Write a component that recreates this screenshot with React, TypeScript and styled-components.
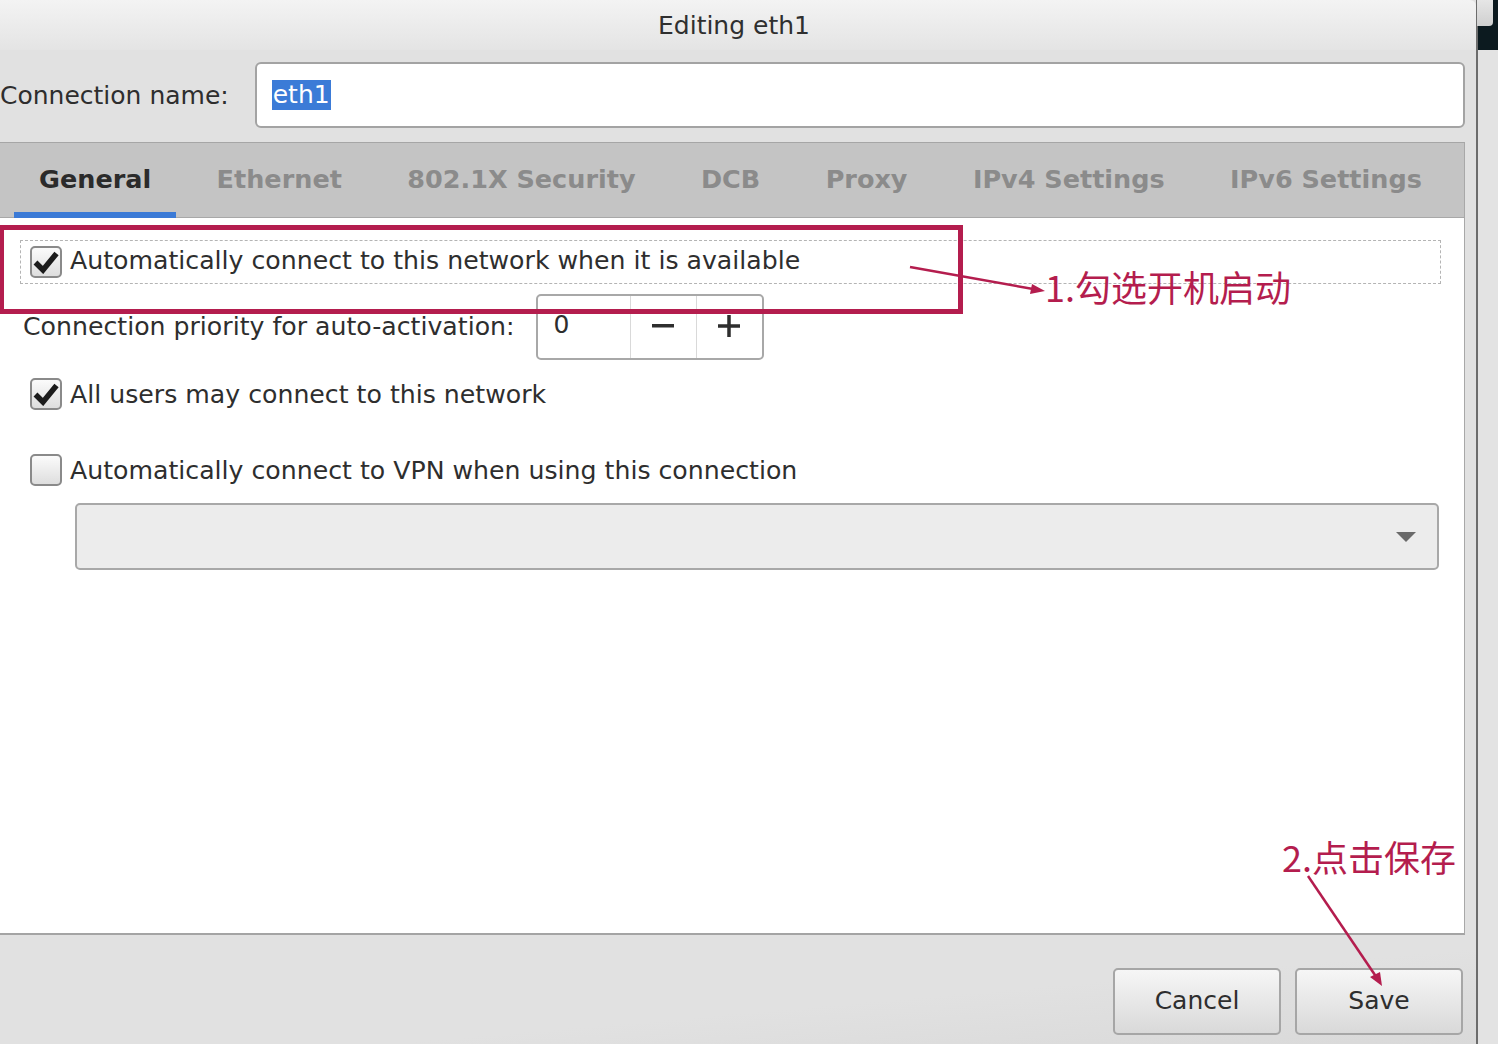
import React from "react";
import styled, { createGlobalStyle } from "styled-components";

const Global = createGlobalStyle`
  html, body { margin: 0; padding: 0; background: #e2e2e2; }
  body { font-family: "DejaVu Sans", "Liberation Sans", sans-serif; }
  * { box-sizing: border-box; }
`;

const Root = styled.div`
  position: relative;
  display: flex;
  width: 1498px;
  height: 1044px;
  overflow: hidden;
  background: #e2e2e2;
`;

const Dialog = styled.div`
  width: 1476px;
  height: 1044px;
  display: flex;
  flex-direction: column;
  background: #e1e1e1;
  border-top-right-radius: 6px;
`;

const WindowEdge = styled.div`
  width: 2px;
  background: #6c6c6c;
`;

const SideStrip = styled.div`
  flex: 1;
  display: flex;
  flex-direction: column;
  background: #e3e3e3;
`;

const SideDark = styled.div`
  height: 50px;
  background: #0c1a1f;
`;

const SideTile = styled.div`
  width: 16px;
  height: 26px;
  margin-left: -1px;
  background: linear-gradient(#e6e6e6, #cfcfcf);
  border-bottom-right-radius: 4px;
`;

const TitleBar = styled.div`
  height: 50px;
  display: flex;
  align-items: center;
  justify-content: center;
  padding-right: 8px;
  background: linear-gradient(#f3f3f3, #e4e4e4);
  color: #2f2f2f;
  font-size: 25px;
  border-top-right-radius: 6px;
`;

const Header = styled.div`
  height: 92px;
  display: flex;
  align-items: center;
  gap: 26px;
  margin-right: 11px;
  padding-bottom: 2px;
`;

const FieldLabel = styled.span`
  font-size: 25px;
  color: #2e2e2e;
  white-space: nowrap;
`;

const TextEntry = styled.div`
  flex: 1;
  height: 66px;
  display: flex;
  align-items: center;
  padding-left: 15px;
  background: #fff;
  border: 2px solid #a3a3a3;
  border-radius: 6px;
  font-size: 25px;
`;

const Selection = styled.span`
  background: #3b7bd7;
  color: #fff;
  padding: 1px 1px 2px;
  line-height: 27px;
`;

const Notebook = styled.div`
  flex: 1;
  display: flex;
  flex-direction: column;
  margin-right: 11px;
`;

const TabBar = styled.div`
  height: 76px;
  display: flex;
  align-items: stretch;
  padding-left: 14px;
  background: #c4c4c4;
  border-top: 1px solid #a6a6a6;
  border-bottom: 1px solid #a8a8a8;
  border-right: 1px solid #a8a8a8;
`;

const Tab = styled.div<{ $active?: boolean }>`
  display: flex;
  align-items: center;
  padding: 0 25px 4px;
  margin-right: 15.4px;
  margin-bottom: -1px;
  font-size: 25.5px;
  font-weight: bold;
  color: ${(p) => (p.$active ? "#2b2b2b" : "#8b8b8b")};
  box-shadow: ${(p) => (p.$active ? "inset 0 -6px 0 #3b7ad6" : "none")};
  white-space: nowrap;
`;

const Page = styled.div`
  flex: 1;
  display: flex;
  flex-direction: column;
  padding: 22px 23px 0 20px;
  background: #fff;
  border-right: 1px solid #a8a8a8;
  border-bottom: 2px solid #a4a4a4;
`;

const FocusRow = styled.div`
  height: 44px;
  display: flex;
  align-items: center;
  padding-left: 9px;
  padding-bottom: 1px;
  border: 1px dashed #b4b4b4;
`;

const CheckRow = styled.div<{ $gap: number }>`
  display: flex;
  align-items: center;
  height: 32px;
  margin-top: ${(p) => p.$gap}px;
  padding-left: 10px;
`;

const Box = styled.span<{ $checked?: boolean }>`
  width: 32px;
  height: 32px;
  flex: none;
  display: flex;
  align-items: center;
  justify-content: center;
  border: 2px solid #8a8a8a;
  border-radius: 5px;
  background: linear-gradient(#fbfbfb, #dedede);
`;

const Label = styled.span<{ $lift?: number }>`
  margin-left: 8px;
  padding-bottom: ${(p) => p.$lift ?? 0}px;
  font-size: 25.2px;
  color: #2e2e2e;
  white-space: nowrap;
`;

const PriorityRow = styled.div`
  display: flex;
  align-items: center;
  gap: 21px;
  height: 65px;
  margin-top: 10px;
  padding-left: 3px;
`;

const PriorityLabel = styled.span`
  font-size: 25.2px;
  color: #2e2e2e;
  white-space: nowrap;
`;

const Spin = styled.div`
  display: flex;
  height: 66px;
  border: 2px solid #a8a8a8;
  border-radius: 5px;
  background: #fff;
`;

const SpinValue = styled.div`
  width: 93px;
  display: flex;
  align-items: center;
  padding: 0 0 4px 16px;
  font-size: 25px;
  color: #2e2e2e;
  border-right: 1px solid #d9d9d9;
`;

const SpinButton = styled.div<{ $last?: boolean }>`
  width: ${(p) => (p.$last ? 65 : 66)}px;
  display: flex;
  align-items: center;
  justify-content: center;
  padding-bottom: 2px;
  border-right: ${(p) => (p.$last ? "none" : "1px solid #d9d9d9")};
`;

const Combo = styled.div`
  height: 67px;
  flex: none;
  margin: 17px 2px 0 55px;
  display: flex;
  align-items: center;
  justify-content: flex-end;
  padding-right: 21px;
  background: #ececec;
  border: 2px solid #a8a8a8;
  border-radius: 5px;
`;

const ButtonBar = styled.div`
  height: 109px;
  display: flex;
  justify-content: flex-end;
  gap: 14px;
  padding: 33px 13px 0 0;
  background: linear-gradient(175deg, #e1e1e1 60%, #d9d9d9);
`;

const Button = styled.button`
  width: 168px;
  height: 67px;
  border: 2px solid #a6a6a6;
  border-radius: 5px;
  background: linear-gradient(#f6f6f6, #d9d9d9);
  font-family: "DejaVu Sans", "Liberation Sans", sans-serif;
  font-size: 25px;
  color: #2e2e2e;
  padding: 0 0 2px;
`;

const RedBox = styled.div`
  position: absolute;
  left: -1px;
  top: 225px;
  width: 964px;
  height: 89px;
  border: 5px solid #b41d4e;
  pointer-events: none;
`;

const Note = styled.div<{ $x: number; $y: number }>`
  position: absolute;
  left: ${(p) => p.$x}px;
  top: ${(p) => p.$y}px;
  font-family: "Noto Sans CJK SC", "Noto Sans", sans-serif;
  font-size: 36px;
  line-height: 40px;
  color: #b41d4e;
  white-space: nowrap;
`;

const Overlay = styled.svg`
  position: absolute;
  left: 0;
  top: 0;
  pointer-events: none;
`;

const Check = () => (
  <svg width="26" height="24" viewBox="0 0 26 24">
    <path d="M2.5 12.5 L10 20 L23.5 3.5" fill="none" stroke="#1c1c1c" strokeWidth="5.5" />
  </svg>
);

const tabs = ["General", "Ethernet", "802.1X Security", "DCB", "Proxy", "IPv4 Settings", "IPv6 Settings"];

export default function App() {
  return (
    <>
      <Global />
      <Root>
        <Dialog>
          <TitleBar>Editing eth1</TitleBar>
          <Header>
            <FieldLabel>Connection name:</FieldLabel>
            <TextEntry>
              <Selection>eth1</Selection>
            </TextEntry>
          </Header>
          <Notebook>
            <TabBar>
              {tabs.map((t, i) => (
                <Tab key={t} $active={i === 0}>
                  {t}
                </Tab>
              ))}
            </TabBar>
            <Page>
              <FocusRow>
                <Box $checked>
                  <Check />
                </Box>
                <Label $lift={2}>Automatically connect to this network when it is available</Label>
              </FocusRow>
              <PriorityRow>
                <PriorityLabel>Connection priority for auto-activation:</PriorityLabel>
                <Spin>
                  <SpinValue>0</SpinValue>
                  <SpinButton>
                    <svg width="22" height="4" viewBox="0 0 22 4">
                      <rect width="22" height="3.5" fill="#2e2e2e" />
                    </svg>
                  </SpinButton>
                  <SpinButton $last>
                    <svg width="22" height="22" viewBox="0 0 22 22">
                      <rect x="0" y="9.25" width="22" height="3.5" fill="#2e2e2e" />
                      <rect x="9.25" y="0" width="3.5" height="22" fill="#2e2e2e" />
                    </svg>
                  </SpinButton>
                </Spin>
              </PriorityRow>
              <CheckRow $gap={19}>
                <Box $checked>
                  <Check />
                </Box>
                <Label>All users may connect to this network</Label>
              </CheckRow>
              <CheckRow $gap={44}>
                <Box />
                <Label>Automatically connect to VPN when using this connection</Label>
              </CheckRow>
              <Combo>
                <svg width="20" height="10" viewBox="0 0 20 10">
                  <path d="M0 0 H20 L10 10 Z" fill="#6a6a6a" />
                </svg>
              </Combo>
            </Page>
          </Notebook>
          <ButtonBar>
            <Button>Cancel</Button>
            <Button>Save</Button>
          </ButtonBar>
        </Dialog>
        <WindowEdge />
        <SideStrip>
          <SideDark>
            <SideTile />
          </SideDark>
        </SideStrip>

        <RedBox />
        <Overlay width="1498" height="1044" viewBox="0 0 1498 1044">
          <line x1="910" y1="267" x2="1036" y2="289.5" stroke="#b41d4e" strokeWidth="2.5" />
          <path d="M1045 291 L1032 284 L1030 294 Z" fill="#b41d4e" />
          <line x1="1308" y1="876" x2="1377" y2="978" stroke="#b41d4e" strokeWidth="2.5" />
          <path d="M1382 986 L1370 977 L1380 972 Z" fill="#b41d4e" />
        </Overlay>
        <Note $x={1045} $y={266}>1.勾选开机启动</Note>
        <Note $x={1282} $y={836}>2.点击保存</Note>
      </Root>
    </>
  );
}
